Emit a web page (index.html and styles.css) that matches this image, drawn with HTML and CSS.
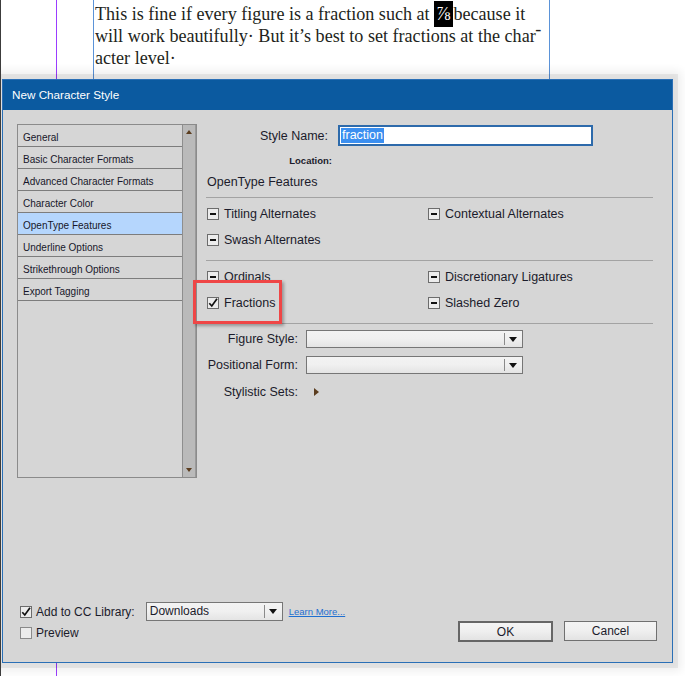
FILE: index.html
```html
<!DOCTYPE html>
<html lang="en">
  <head>
    <meta charset="UTF-8" />
    <meta name="viewport" content="width=device-width, initial-scale=1.0" />
    <title>New Character Style</title>
    <link rel="stylesheet" href="styles.css">
  </head>
  <body>
    <div class="page">
      <div class="guide"></div>
      <div class="frame">
        <p class="copy">This is fine if every figure is a fraction such at <span class="frac">⅞</span>because it<br>will work beautifully· But it’s best to set fractions at the char<span class="hy">-</span><br>acter level·</p>
      </div>

      <div class="dialog">
        <div class="titlebar">New Character Style</div>
        <div class="dialog-body">
          <div class="main">
            <div class="listbox">
              <ul class="cats">
                <li>General</li>
                <li>Basic Character Formats</li>
                <li>Advanced Character Formats</li>
                <li>Character Color</li>
                <li class="active">OpenType Features</li>
                <li>Underline Options</li>
                <li>Strikethrough Options</li>
                <li>Export Tagging</li>
              </ul>
              <div class="scrollbar">
                <span class="arrow-up"></span>
                <span class="arrow-down"></span>
              </div>
            </div>

            <div class="panel">
              <div class="name-row">
                <label class="name-label">Style Name:</label>
                <div class="name-input"><span class="sel">fraction</span></div>
              </div>
              <div class="location-row">Location:</div>
              <div class="section-title">OpenType Features</div>
              <div class="rule"></div>

              <div class="checks">
                <div class="check">
                  <svg class="cb" viewBox="0 0 12 12" width="12" height="12"><rect x="0.5" y="0.5" width="11" height="11" fill="#ececec" stroke="#6c6c6c"/><rect x="3" y="5" width="6" height="2" fill="#111"/></svg>
                  <span>Titling Alternates</span>
                </div>
                <div class="check">
                  <svg class="cb" viewBox="0 0 12 12" width="12" height="12"><rect x="0.5" y="0.5" width="11" height="11" fill="#ececec" stroke="#6c6c6c"/><rect x="3" y="5" width="6" height="2" fill="#111"/></svg>
                  <span>Contextual Alternates</span>
                </div>
                <div class="check">
                  <svg class="cb" viewBox="0 0 12 12" width="12" height="12"><rect x="0.5" y="0.5" width="11" height="11" fill="#ececec" stroke="#6c6c6c"/><rect x="3" y="5" width="6" height="2" fill="#111"/></svg>
                  <span>Swash Alternates</span>
                </div>
                <div class="check"></div>
              </div>
              <div class="rule rule-mid"></div>
              <div class="checks">
                <div class="check">
                  <svg class="cb" viewBox="0 0 12 12" width="12" height="12"><rect x="0.5" y="0.5" width="11" height="11" fill="#ececec" stroke="#6c6c6c"/><rect x="3" y="5" width="6" height="2" fill="#111"/></svg>
                  <span>Ordinals</span>
                </div>
                <div class="check">
                  <svg class="cb" viewBox="0 0 12 12" width="12" height="12"><rect x="0.5" y="0.5" width="11" height="11" fill="#ececec" stroke="#6c6c6c"/><rect x="3" y="5" width="6" height="2" fill="#111"/></svg>
                  <span>Discretionary Ligatures</span>
                </div>
                <div class="check">
                  <svg class="cb" viewBox="0 0 12 12" width="12" height="12"><rect x="0.5" y="0.5" width="11" height="11" fill="#ececec" stroke="#6c6c6c"/><path d="M2.3 6.2 L4.8 9 L10 1.8" fill="none" stroke="#111" stroke-width="1.7"/></svg>
                  <span>Fractions</span>
                </div>
                <div class="check">
                  <svg class="cb" viewBox="0 0 12 12" width="12" height="12"><rect x="0.5" y="0.5" width="11" height="11" fill="#ececec" stroke="#6c6c6c"/><rect x="3" y="5" width="6" height="2" fill="#111"/></svg>
                  <span>Slashed Zero</span>
                </div>
              </div>
              <div class="rule rule-mid"></div>

              <div class="form-row first">
                <label class="form-label">Figure Style:</label>
                <div class="select"><span class="select-arrow"></span></div>
              </div>
              <div class="form-row">
                <label class="form-label">Positional Form:</label>
                <div class="select"><span class="select-arrow"></span></div>
              </div>
              <div class="form-row sets">
                <label class="form-label">Stylistic Sets:</label>
                <span class="disclosure"></span>
              </div>
            </div>
          </div>

          <div class="footer">
            <div class="footer-left">
              <div class="footer-row">
                <svg class="cb" viewBox="0 0 12 12" width="12" height="12"><rect x="0.5" y="0.5" width="11" height="11" fill="#ececec" stroke="#6c6c6c"/><path d="M2.3 6.2 L4.8 9 L10 1.8" fill="none" stroke="#111" stroke-width="1.7"/></svg>
                <span class="footer-label">Add to CC Library:</span>
                <div class="select lib"><span class="lib-text">Downloads</span><span class="select-arrow"></span></div>
                <a class="learn" href="#">Learn More...</a>
              </div>
              <div class="footer-row">
                <svg class="cb" viewBox="0 0 12 12" width="12" height="12"><rect x="0.5" y="0.5" width="11" height="11" fill="#ececec" stroke="#8a8a8a"/></svg>
                <span class="footer-label">Preview</span>
              </div>
            </div>
            <div class="buttons">
              <button class="btn default">OK</button>
              <button class="btn">Cancel</button>
            </div>
          </div>
        </div>
        <div class="highlight"></div>
      </div>
    </div>
  </body>
</html>
```

FILE: styles.css
```css
body {
  margin: 0;
  background: #fff;
  font-family: "Liberation Sans", Arial, sans-serif;
}
.page {
  position: relative;
  width: 685px;
  height: 676px;
  overflow: hidden;
  border-left: 1px solid #3c3c3c;
  box-sizing: border-box;
}
.guide {
  position: absolute;
  left: 55px;
  top: 0;
  width: 1px;
  height: 676px;
  background: #9b3dff;
}
.frame {
  margin-left: 92px;
  width: 457px;
  height: 100px;
  box-sizing: border-box;
  border-left: 1px solid #5b93d8;
  border-right: 1px solid #5b93d8;
}
.copy {
  margin: 0;
  padding: 3px 0 0 1px;
  font: 18.1px/22px "Liberation Serif", "Times New Roman", serif;
  color: #231f20;
  white-space: nowrap;
}
.frac {
  background: #000;
  color: #fff;
  font-size: 19px;
  padding: 2px 3px 3px 2px;
}
.hy {
  position: relative;
  top: -7px;
}

/* dialog */
.dialog {
  position: absolute;
  left: 1px;
  top: 79px;
  width: 671px;
  height: 584px;
  box-sizing: border-box;
  border: 1px solid #2a6fb6;
  background: #d6d6d6;
  box-shadow: 0 0 0 5px rgba(0, 0, 0, 0.06), 0 0 9px 8px rgba(0, 0, 0, 0.07);
}
.titlebar {
  height: 30px;
  background: #0b5aa0;
  color: #fff;
  font-size: 11.7px;
  line-height: 30px;
  padding-left: 9px;
}
.dialog-body {
  height: 552px;
  box-sizing: border-box;
  padding: 14px 0 20px 14px;
  display: flex;
  flex-direction: column;
  color: #1b1b2b;
}
.main {
  display: flex;
  gap: 9px;
}

/* category list */
.listbox {
  width: 180px;
  height: 354px;
  box-sizing: border-box;
  border: 1px solid #8b8b8b;
  display: flex;
}
.cats {
  list-style: none;
  margin: 0;
  padding: 0;
  flex: 1;
}
.cats li {
  height: 19px;
  padding-top: 2px;
  border-bottom: 1px solid #7d7d7d;
  padding-left: 5px;
  font-size: 10px;
  line-height: 21px;
  color: #16162a;
}
.cats li.active {
  background: #b5d6fd;
}
.scrollbar {
  position: relative;
  width: 12px;
  background: #bababa;
  border-left: 1px solid #8e8e8e;
  border-right: 1px solid #9a9a9a;
}
.arrow-up,
.arrow-down {
  position: absolute;
  left: 2.5px;
  width: 0;
  height: 0;
  border-left: 3.5px solid transparent;
  border-right: 3.5px solid transparent;
}
.arrow-up {
  top: 5px;
  border-bottom: 4px solid #5b3d1f;
}
.arrow-down {
  bottom: 5px;
  border-top: 4px solid #5b3d1f;
}

/* right panel */
.panel {
  width: 447px;
  font-size: 12.5px;
}
.name-row {
  display: flex;
  align-items: center;
  gap: 10px;
  margin-top: 1px;
}
.name-label {
  width: 122px;
  text-align: right;
}
.name-input {
  width: 255px;
  height: 21px;
  box-sizing: border-box;
  border: 2px solid #2d6aab;
  background: #fff;
  padding: 1px 1px;
}
.sel {
  display: inline-block;
  background: #3b8ff0;
  color: #fff;
  line-height: 15px;
  padding: 0 1px;
}
.location-row {
  width: 126px;
  margin-top: 8px;
  height: 14px;
  line-height: 14px;
  text-align: right;
  font-size: 9.5px;
  font-weight: bold;
}
.section-title {
  margin-top: 7px;
  height: 14px;
  line-height: 14px;
  padding-left: 1px;
}
.rule {
  height: 1px;
  background: #a3a3a3;
  margin-top: 8px;
}
.rule-mid {
  margin-top: 10px;
}
.checks {
  display: grid;
  grid-template-columns: 221px 1fr;
  row-gap: 6px;
  margin-top: 6px;
}
.check {
  display: flex;
  align-items: center;
  gap: 5px;
  height: 20px;
  padding-left: 1px;
}
.cb {
  flex: none;
}
.form-row {
  display: flex;
  align-items: center;
  gap: 8px;
  height: 18px;
  margin-top: 8px;
}
.form-row.first {
  margin-top: 6px;
}
.form-row.sets {
  margin-top: 9px;
}
.form-label {
  width: 92px;
  text-align: right;
}
.select {
  position: relative;
  width: 217px;
  height: 18px;
  box-sizing: border-box;
  border: 1px solid #767676;
  background: linear-gradient(#f3f3f3, #f0f0f0 50%, #e4e4e4);
}
.select::after {
  content: "";
  position: absolute;
  right: 17px;
  top: 2px;
  bottom: 2px;
  width: 1px;
  background: #8a8a8a;
}
.select-arrow {
  position: absolute;
  right: 5px;
  top: 6px;
  width: 0;
  height: 0;
  border-left: 4px solid transparent;
  border-right: 4px solid transparent;
  border-top: 5px solid #111;
}
.disclosure {
  width: 0;
  height: 0;
  margin-left: 8px;
  border-top: 4.5px solid transparent;
  border-bottom: 4.5px solid transparent;
  border-left: 5px solid #5b3d1f;
}

/* footer */
.footer {
  margin-top: auto;
  display: flex;
  justify-content: space-between;
  align-items: flex-end;
  padding: 0 15px 0 3px;
  font-size: 12px;
}
.footer-left {
  display: flex;
  flex-direction: column;
  gap: 2px;
}
.footer-row {
  display: flex;
  align-items: center;
  height: 19px;
}
.footer-label {
  margin-left: 4px;
}
.select.lib {
  width: 137px;
  height: 19px;
  margin-left: 11px;
}
.lib-text {
  display: block;
  padding-left: 3px;
  line-height: 17px;
}
.learn {
  margin-left: 6px;
  font-size: 9.5px;
  color: #1f6fd0;
  text-decoration: underline;
}
.buttons {
  display: flex;
  align-items: flex-end;
  gap: 11px;
  margin-bottom: 1px;
}
.btn {
  width: 93px;
  height: 20px;
  padding: 0;
  border: 1px solid #707070;
  background: linear-gradient(#f4f4f4, #efefef 50%, #e3e3e3);
  font: 12px "Liberation Sans", Arial, sans-serif;
  color: #1b1b2b;
}
.btn.default {
  width: 95px;
  height: 21px;
  border: 2px solid #666;
  margin-bottom: -1px;
}

/* annotation over the Fractions option */
.highlight {
  position: absolute;
  left: 190px;
  top: 200px;
  width: 89px;
  height: 44px;
  box-sizing: border-box;
  border: 3px solid #ef4646;
  box-shadow: 2px 2px 3px rgba(0, 0, 0, 0.3);
}
```
